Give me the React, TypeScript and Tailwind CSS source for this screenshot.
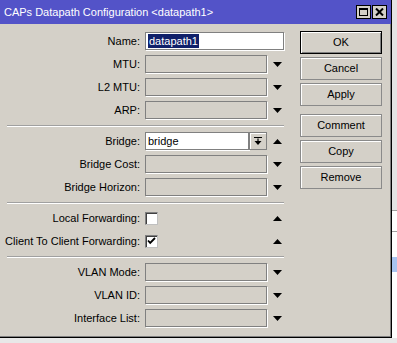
import React from "react";

const font = { fontFamily: '"Liberation Sans", Arial, sans-serif' };

const Down = () => (
  <svg width="9" height="5" viewBox="0 0 9 5" className="block">
    <path d="M0 0h9L4.5 5z" fill="#000" />
  </svg>
);
const Up = () => (
  <svg width="9" height="5" viewBox="0 0 9 5" className="block">
    <path d="M0 5h9L4.5 0z" fill="#000" />
  </svg>
);

function Field({ white, w = 122, children }: { white?: boolean; w?: number; children?: React.ReactNode }) {
  return (
    <div
      className={`shrink-0 h-[18px] border border-[#808080] shadow-[1px_1px_0_#ffffff] flex items-center pl-[2px] text-[11px] text-black ${
        white ? "bg-white" : "bg-[#d4d0c8]"
      }`}
      style={{ width: w }}
    >
      {children}
    </div>
  );
}

function Row({
  label,
  children,
  arrow,
  wide,
}: {
  label: string;
  children?: React.ReactNode;
  arrow?: "up" | "down";
  wide?: boolean;
}) {
  return (
    <div className="flex items-center h-[18px]">
      <div className="w-[140px] shrink-0 text-right text-[11px] text-black whitespace-nowrap">{label}</div>
      <div className={`ml-[5px] flex items-center shrink-0 ${wide ? "" : "w-[122px]"}`}>{children}</div>
      {!wide && (
        <div className="ml-[6px] w-[9px]">{arrow === "down" ? <Down /> : arrow === "up" ? <Up /> : null}</div>
      )}
    </div>
  );
}

function Sep() {
  return (
    <div className="mt-[6px] mb-[5px] ml-[7px] w-[277px] h-[2px] border-t border-[#a0a0a0] border-b border-b-white" />
  );
}

function Checkbox({ checked }: { checked?: boolean }) {
  return (
    <div className="w-[13px] h-[13px] bg-white border border-t-[#808080] border-l-[#808080] border-r-[#c0c0c0] border-b-[#c0c0c0] shadow-[inset_1px_1px_0_#404040] flex items-center justify-center">
      {checked && (
        <svg width="9" height="8" viewBox="0 0 9 8">
          <path d="M1 3.5l2.2 2.4L8 1" stroke="#000" strokeWidth="1.8" fill="none" />
        </svg>
      )}
    </div>
  );
}

function Btn({ children, def }: { children: React.ReactNode; def?: boolean }) {
  return (
    <div
      className={`h-[23px] w-[82px] flex items-center justify-center text-[11px] text-black bg-[#d4d0c8] border ${
        def ? "border-black shadow-[inset_1px_1px_0_#ffffff,inset_-1px_-1px_0_#808080]" : "border-[#8a8a8a] shadow-[inset_1px_1px_0_#ffffff]"
      }`}
    >
      {children}
    </div>
  );
}

export default function App() {
  return (
    <div className="w-[397px] h-[343px] bg-[#ececec] overflow-hidden flex flex-col" style={font}>
      <div className="flex">
        <div className="w-[392px] h-[338px] bg-[#d4d0c8] border-r border-b border-black shadow-[inset_-1px_-1px_0_#808080] flex flex-col">
          {/* title bar */}
          <div className="h-[24px] bg-[#5353c8] flex items-center pl-[4px] pr-[4px]">
            <div className="text-white text-[11px] whitespace-nowrap flex-1">
              CAPs Datapath Configuration &lt;datapath1&gt;
            </div>
            <div className="flex gap-[1px]">
              <div className="w-[15px] h-[14px] bg-[#d4d0c8] border border-black flex items-center justify-center">
                <div className="w-[9px] h-[8px] border border-black border-t-2" />
              </div>
              <div className="w-[15px] h-[14px] bg-[#d4d0c8] border border-black flex items-center justify-center">
                <svg width="9" height="8" viewBox="0 0 9 8">
                  <path d="M1 0.5l7 7M8 0.5l-7 7" stroke="#000" strokeWidth="2" />
                </svg>
              </div>
            </div>
          </div>
          {/* body */}
          <div className="flex pt-[8px]">
            <div className="w-[296px] flex flex-col">
              <div className="flex flex-col gap-[5px]">
                <Row label="Name:" wide>
                  <Field white w={139}>
                    <span className="bg-[#10206a] text-white leading-[14px] px-[1px]">datapath1</span>
                  </Field>
                </Row>
                <Row label="MTU:" arrow="down">
                  <Field />
                </Row>
                <Row label="L2 MTU:" arrow="down">
                  <Field />
                </Row>
                <Row label="ARP:" arrow="down">
                  <Field />
                </Row>
              </div>
              <Sep />
              <div className="flex flex-col gap-[5px]">
                <Row label="Bridge:" arrow="up">
                  <Field white w={104}>
                    <span>bridge</span>
                  </Field>
                  <div className="w-[18px] h-[18px] border border-[#808080] bg-[#d4d0c8] shadow-[inset_1px_1px_0_#ffffff] flex items-center justify-center">
                    <svg width="8" height="9" viewBox="0 0 8 9">
                      <path d="M0 0.5h8M4 1.5v3" stroke="#000" strokeWidth="1.2" />
                      <path d="M0.5 4h7L4 8z" fill="#000" />
                    </svg>
                  </div>
                </Row>
                <Row label="Bridge Cost:" arrow="down">
                  <Field />
                </Row>
                <Row label="Bridge Horizon:" arrow="down">
                  <Field />
                </Row>
              </div>
              <Sep />
              <div className="flex flex-col gap-[5px]">
                <Row label="Local Forwarding:" arrow="up">
                  <Checkbox />
                </Row>
                <Row label="Client To Client Forwarding:" arrow="up">
                  <Checkbox checked />
                </Row>
              </div>
              <Sep />
              <div className="flex flex-col gap-[5px]">
                <Row label="VLAN Mode:" arrow="down">
                  <Field />
                </Row>
                <Row label="VLAN ID:" arrow="down">
                  <Field />
                </Row>
                <Row label="Interface List:" arrow="down">
                  <Field />
                </Row>
              </div>
            </div>
            <div className="ml-[4px] flex flex-col -mt-[1px]">
              <div className="flex flex-col gap-[3px]">
                <Btn def>OK</Btn>
                <Btn>Cancel</Btn>
                <Btn>Apply</Btn>
              </div>
              <div className="flex flex-col gap-[3px] mt-[8px]">
                <Btn>Comment</Btn>
                <Btn>Copy</Btn>
                <Btn>Remove</Btn>
              </div>
            </div>
          </div>
        </div>
        {/* right strip (background window) */}
        <div className="flex-1 flex flex-col">
          <div className="h-[211px] bg-[#e4e4e4] border-b border-[#a0a0a0]" />
          <div className="h-[21px] bg-white border-b border-[#a0a0a0]" />
          <div className="h-[25px] bg-white" />
          <div className="h-[15px] bg-[#a8c4f0]" />
          <div className="flex-1 bg-white" />
        </div>
      </div>
      <div className="flex-1 bg-[#e8e8e8]" />
    </div>
  );
}
